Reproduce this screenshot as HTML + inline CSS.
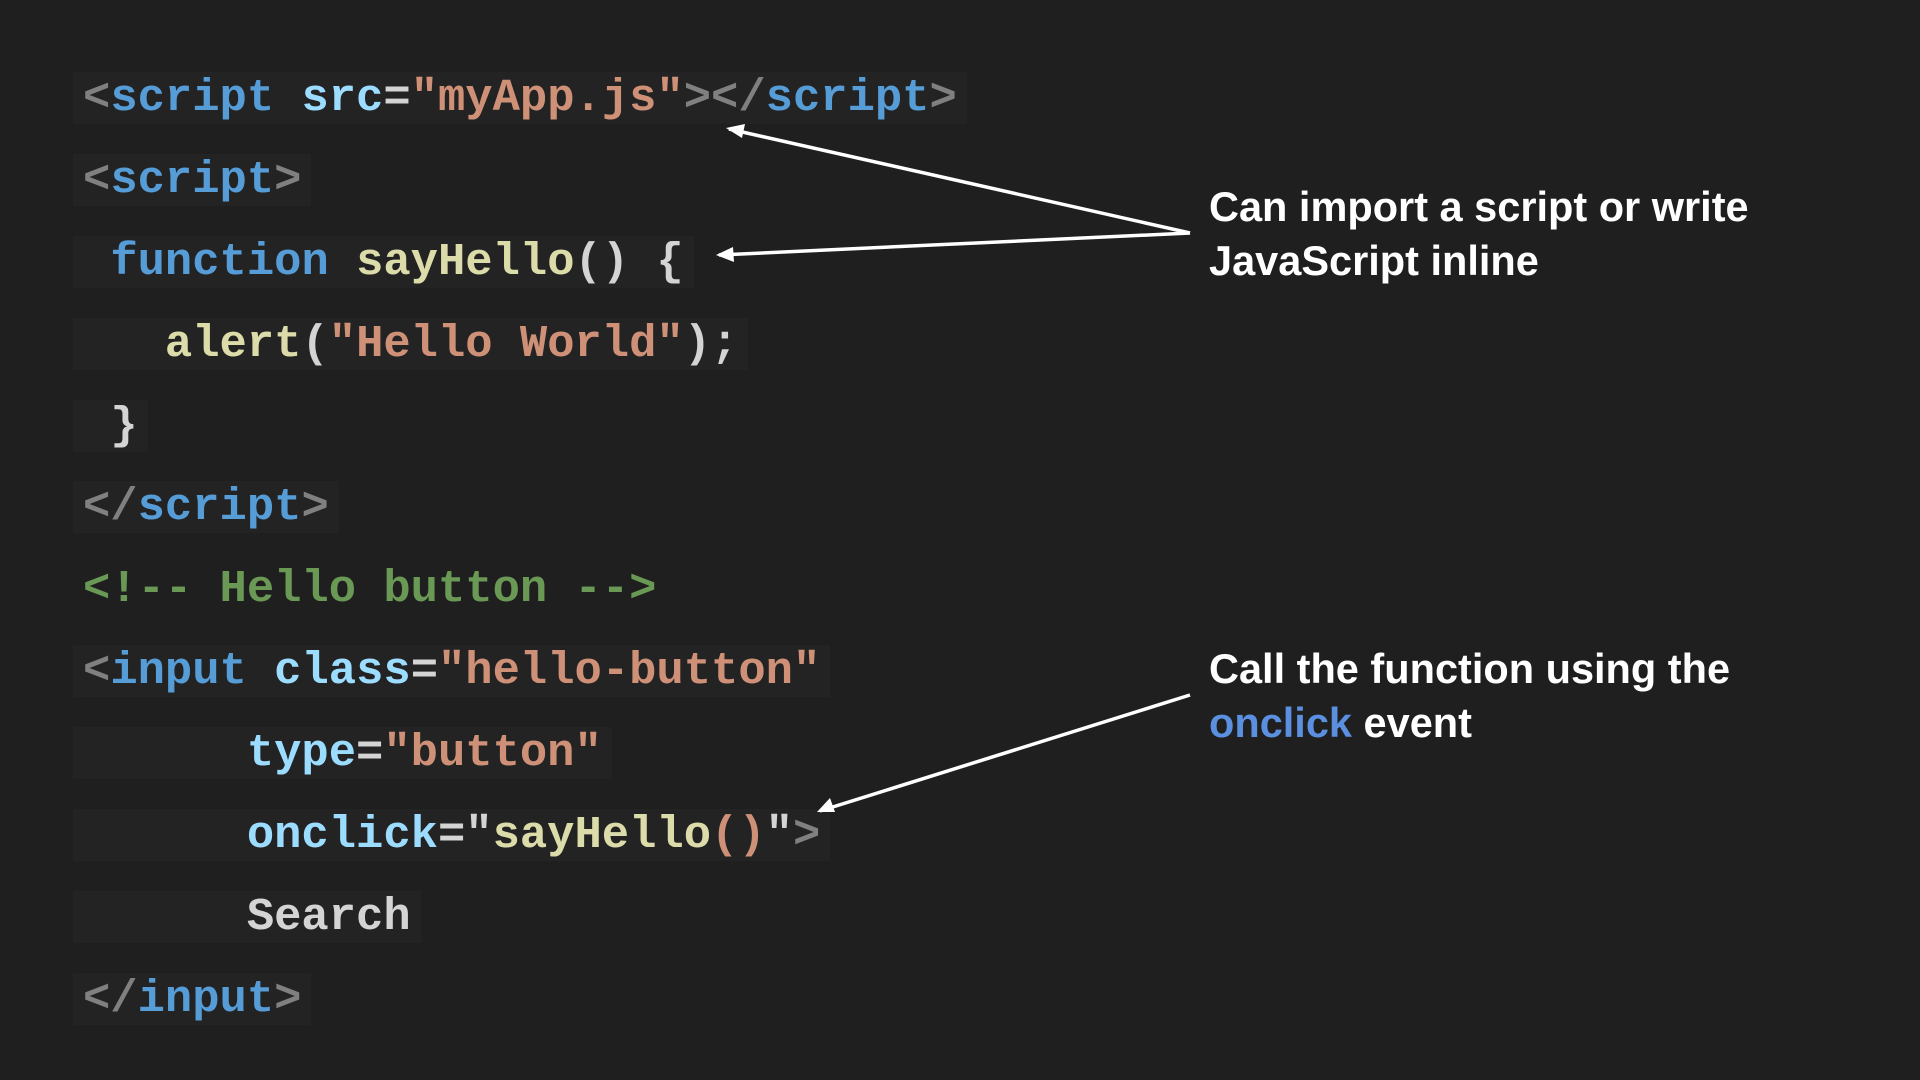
<!DOCTYPE html>
<html><head><style>
html,body{margin:0;padding:0;background:#1f1f1f;width:1920px;height:1080px;overflow:hidden}
.l{position:absolute;left:73px;height:52px;line-height:52px;font-family:"Liberation Mono",monospace;font-weight:bold;font-size:45.5px;white-space:pre;background:#232323;padding:0 10px;color:#d4d4d4}
.g{color:#808080}.t{color:#569cd6}.a{color:#9cdcfe}.s{color:#ce9178}.f{color:#dcdcaa}.c{color:#6a9955}.w{color:#d4d4d4}
.n{position:absolute;left:1209px;font-family:"Liberation Sans",sans-serif;font-weight:bold;font-size:41.5px;color:#fff;line-height:54px;letter-spacing:0}
</style></head><body>
<div class="l" style="top:72px"><span class="g">&lt;</span><span class="t">script</span> <span class="a">src</span><span class="w">=</span><span class="s">"myApp.js"</span><span class="g">&gt;&lt;/</span><span class="t">script</span><span class="g">&gt;</span></div>
<div class="l" style="top:154px"><span class="g">&lt;</span><span class="t">script</span><span class="g">&gt;</span></div>
<div class="l" style="top:236px"> <span class="t">function</span> <span class="f">sayHello</span><span class="w">() {</span></div>
<div class="l" style="top:318px">   <span class="f">alert</span><span class="w">(</span><span class="s">"Hello World"</span><span class="w">);</span></div>
<div class="l" style="top:400px"> <span class="w">}</span></div>
<div class="l" style="top:481px"><span class="g">&lt;/</span><span class="t">script</span><span class="g">&gt;</span></div>
<div class="l" style="top:563px;background:none"><span class="c">&lt;!-- Hello button --&gt;</span></div>
<div class="l" style="top:645px"><span class="g">&lt;</span><span class="t">input</span> <span class="a">class</span><span class="w">=</span><span class="s">"hello-button"</span></div>
<div class="l" style="top:727px">      <span class="a">type</span><span class="w">=</span><span class="s">"button"</span></div>
<div class="l" style="top:809px">      <span class="a">onclick</span><span class="w">="</span><span class="f">sayHello</span><span class="s">()</span><span class="w">"</span><span class="g">&gt;</span></div>
<div class="l" style="top:891px">      <span class="w">Search</span></div>
<div class="l" style="top:973px"><span class="g">&lt;/</span><span class="t">input</span><span class="g">&gt;</span></div>

<div class="n" style="top:180px">Can import a script or write<br>JavaScript inline</div>
<div class="n" style="top:642px">Call the function using the<br><span style="color:#5b8fe0">onclick</span> event</div>

<svg width="1920" height="1080" style="position:absolute;left:0;top:0">
<g stroke="#fff" stroke-width="3.5" fill="none">
<line x1="1190" y1="233" x2="729" y2="129"/>
<line x1="1190" y1="233" x2="719" y2="255"/>
<line x1="1190" y1="695" x2="820" y2="811"/>
</g>
<g fill="#fff">
<path d="M726,128 L745,124 L742,138 z"/>
<path d="M716,255 L733,247 L734,262 z"/>
<path d="M817,812 L830,798 L835,812 z"/>
</g>
</svg>
</body></html>
